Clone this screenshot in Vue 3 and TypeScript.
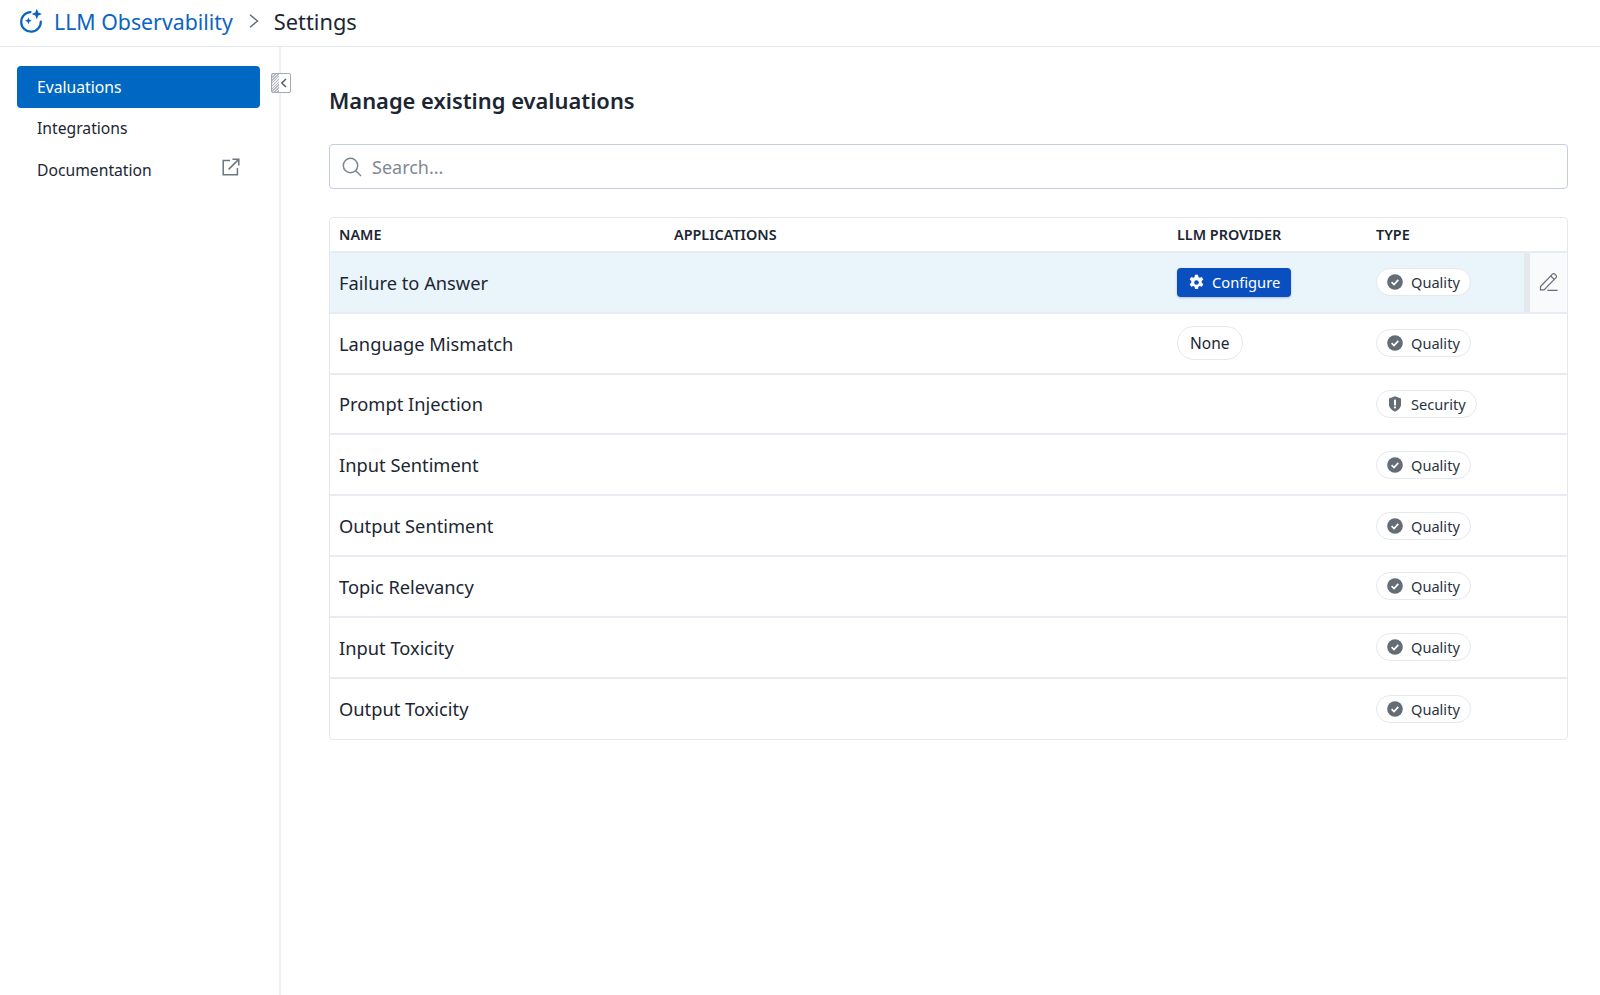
<script setup lang="ts">
interface Row {
  name: string;
  provider?: 'configure' | 'none';
  type: 'Quality' | 'Security';
  hover?: boolean;
}

const rows: Row[] = [
  { name: 'Failure to Answer', provider: 'configure', type: 'Quality', hover: true },
  { name: 'Language Mismatch', provider: 'none', type: 'Quality' },
  { name: 'Prompt Injection', type: 'Security' },
  { name: 'Input Sentiment', type: 'Quality' },
  { name: 'Output Sentiment', type: 'Quality' },
  { name: 'Topic Relevancy', type: 'Quality' },
  { name: 'Input Toxicity', type: 'Quality' },
  { name: 'Output Toxicity', type: 'Quality' },
];
</script>

<template>
  <div class="page">
    <header class="topbar">
      <svg class="logo" width="26" height="26" viewBox="0 0 26 26" fill="none">
        <path d="M12.500 4.100A9.800 9.800 0 1 0 22.800 13.500" stroke="#0b64c0" stroke-width="2.200" stroke-linecap="round" />
        <path d="M18.800 .8l1.500 3.700 3.700 1.500-3.700 1.500-1.500 3.700-1.500-3.700-3.700-1.500 3.700-1.500z" fill="#0b64c0" />
        <path d="M10.400 9.400l1 2.400 2.400 1-2.400 1-1 2.400-1-2.400-2.400-1 2.400-1z" fill="#0b64c0" />
      </svg>
      <span class="crumb-link">LLM Observability</span>
      <svg class="crumb-sep" width="12" height="16" viewBox="0 0 12 16" fill="none">
        <path d="M2 1.800L9.500 8 2 14.200" stroke="#5f6b7a" stroke-width="1.400" />
      </svg>
      <span class="crumb-current">Settings</span>
    </header>

    <div class="body">
      <aside class="sidebar">
        <nav class="nav">
          <a class="nav-item active">Evaluations</a>
          <a class="nav-item">Integrations</a>
          <a class="nav-item">
            Documentation
            <svg class="ext" width="18" height="18" viewBox="0 0 18 18" fill="none">
              <path d="M8 2.600H1.200v14.200h14.200V10" stroke="#6c7680" stroke-width="1.500" />
              <path d="M6.600 11.400L16.400 1.600M10.400 1.200h6.400v6.400" stroke="#6c7680" stroke-width="1.500" />
            </svg>
          </a>
        </nav>
        <button class="collapse" type="button">
          <span class="hatch"></span>
          <svg width="10" height="18" viewBox="0 0 10 18" fill="none">
            <path d="M7 5L2.800 9 7 13" stroke="#4f5965" stroke-width="1.400" />
          </svg>
        </button>
      </aside>

      <main class="main">
        <h1 class="title">Manage existing evaluations</h1>

        <div class="search">
          <svg width="22" height="22" viewBox="0 0 22 22" fill="none">
            <circle cx="9.500" cy="9.500" r="7.200" stroke="#7b8590" stroke-width="1.500" />
            <path d="M14.800 14.800l5.200 5.200" stroke="#7b8590" stroke-width="1.500" />
          </svg>
          <span class="placeholder">Search...</span>
        </div>

        <div class="table">
          <div class="row head">
            <div class="col-name">NAME</div>
            <div class="col-apps">APPLICATIONS</div>
            <div class="col-provider">LLM PROVIDER</div>
            <div class="col-type">TYPE</div>
          </div>
          <div v-for="row in rows" :key="row.name" class="row item" :class="{ hover: row.hover }">
            <div class="col-name">{{ row.name }}</div>
            <div class="col-apps"></div>
            <div class="col-provider">
              <button v-if="row.provider === 'configure'" class="configure" type="button">
                <svg width="17" height="17" viewBox="0 0 16 16">
                  <path fill="#fff" fill-rule="evenodd" d="M6.600.8h2.800l.4 2 1.300.7 1.900-.7 1.400 2.400-1.500 1.400v1.600l1.500 1.400-1.400 2.400-1.900-.7-1.300.7-.4 2H6.600l-.4-2-1.300-.7-1.900.7-1.400-2.400 1.500-1.400V6.600L1.600 5.200 3 2.800l1.900.7 1.300-.7zM8 5.800a2.200 2.200 0 1 0 0 4.400 2.200 2.200 0 0 0 0-4.400z" />
                </svg>
                Configure
              </button>
              <span v-else-if="row.provider === 'none'" class="none-pill">None</span>
            </div>
            <div class="col-type">
              <span class="pill">
                <svg v-if="row.type === 'Quality'" width="16" height="16" viewBox="0 0 16 16">
                  <circle cx="8" cy="8" r="7.800" fill="#646d76" />
                  <path d="M4.600 8.200l2.400 2.300 4.300-4.600" fill="none" stroke="#fff" stroke-width="1.700" />
                </svg>
                <svg v-else width="16" height="16" viewBox="0 0 16 16">
                  <path d="M8 .2l6 2.200v6.200c0 3.200-2.700 5.700-6 7.200-3.300-1.500-6-4-6-7.200V2.400z" fill="#646d76" />
                  <rect x="7" y="3.400" width="2" height="6" rx=".7" fill="#fff" />
                  <circle cx="8" cy="11.400" r="1.150" fill="#fff" />
                </svg>
                {{ row.type }}
              </span>
            </div>
            <div v-if="row.hover" class="edit-cell">
              <svg width="20" height="20" viewBox="0 0 20 20" fill="none">
                <path d="M1.500 14.500L13.500 2.200c.7-.7 1.700-.7 2.300-.1l1.300 1.300c.6.600.6 1.600-.1 2.300L5 17.800H1.500z" stroke="#646d76" stroke-width="1.200" />
                <path d="M11.800 4l3.600 3.600M8.500 18.300h10" stroke="#646d76" stroke-width="1.200" />
              </svg>
            </div>
          </div>
        </div>
      </main>
    </div>
  </div>
</template>

<style>
html,
body {
  margin: 0;
  background: #fff;
}
</style>

<style scoped>
.page {
  width: 1600px;
  height: 995px;
  display: flex;
  flex-direction: column;
  overflow: hidden;
  font-family: 'Noto Sans', sans-serif;
  color: #1c2633;
  background: #fff;
}

.topbar {
  height: 42px;
  display: flex;
  align-items: center;
  padding-left: 18px;
  padding-bottom: 4px;
  border-bottom: 1px solid #e6e8f0;
  flex-shrink: 0;
}

.logo {
  margin-right: 10px;
}

.crumb-link {
  font-size: 21.300px;
  color: #0b64c0;
}

.crumb-sep {
  margin: 0 14px 0 15px;
}

.crumb-current {
  font-size: 21.800px;
  color: #1c2633;
}

.body {
  flex: 1;
  display: flex;
}

.sidebar {
  width: 281px;
  flex-shrink: 0;
  box-sizing: border-box;
  border-right: 2px solid #eff0f5;
  position: relative;
  padding: 19px 19px 0 17px;
}

.nav {
  display: flex;
  flex-direction: column;
}

.nav-item {
  height: 41.500px;
  display: flex;
  align-items: center;
  justify-content: space-between;
  padding: 0 20px;
  font-size: 15.700px;
  color: #1c2633;
  border-radius: 4px;
}

.nav-item.active {
  background: #0067c2;
  color: #fff;
}

.ext {
  margin-top: -5px;
}

.collapse {
  position: absolute;
  top: 26px;
  left: 271px;
  width: 20px;
  height: 20px;
  padding: 0;
  display: flex;
  align-items: center;
  background: #fff;
  border: 1px solid #a4aab3;
  border-radius: 2px;
}

.hatch {
  width: 7px;
  height: 100%;
  flex-shrink: 0;
  background: repeating-linear-gradient(135deg, #b6bbc2 0 1px, #eceef1 1px 2px);
}

.main {
  flex: 1;
  min-width: 0;
  padding: 36px 32px 0 48px;
}

.title {
  margin: 0;
  font-size: 21.900px;
  line-height: 36px;
  font-weight: 600;
  color: #1c2633;
}

.search {
  margin-top: 25px;
  height: 45px;
  box-sizing: border-box;
  display: flex;
  align-items: center;
  gap: 9px;
  padding-left: 11px;
  border: 1.500px solid #c6cce4;
  border-radius: 4px;
}

.placeholder {
  font-size: 18px;
  color: #7f8994;
}

.table {
  margin-top: 28px;
  border: 1px solid #e6e8f0;
  border-radius: 4px;
  overflow: hidden;
}

.row {
  display: grid;
  grid-template-columns: 335px 503px 199px 1fr;
  align-items: center;
  padding-left: 9px;
  position: relative;
}

.head {
  height: 33px;
  font-size: 14.400px;
  font-weight: 600;
  color: #1c2633;
  border-bottom: 2px solid #e9ebf2;
}

.item {
  height: 60.800px;
  box-sizing: border-box;
  font-size: 18.300px;
  border-bottom: 2px solid #e9ebf2;
}

.item:last-child {
  border-bottom: none;
}

.item.hover {
  background: #e9f4fb;
}

.configure {
  height: 29px;
  display: inline-flex;
  align-items: center;
  gap: 7px;
  padding: 0 11px 0 11px;
  font-family: inherit;
  font-size: 14.700px;
  color: #fff;
  background: #0a4fbf;
  border: none;
  border-radius: 4px;
  box-shadow: 0 1px 2px rgba(20, 40, 90, 0.25);
}

.none-pill {
  display: inline-flex;
  align-items: center;
  height: 34px;
  box-sizing: border-box;
  padding: 0 13px 0 12px;
  font-size: 15.500px;
  background: #fff;
  border: 1px solid #e6e8f0;
  border-radius: 17px;
}

.pill {
  display: inline-flex;
  align-items: center;
  gap: 8px;
  height: 28px;
  box-sizing: border-box;
  padding: 0 10px;
  font-size: 14.600px;
  color: #2a3442;
  background: #fff;
  border: 1px solid #e6e8f0;
  border-radius: 14px;
}

.edit-cell {
  position: absolute;
  top: 0;
  right: 0;
  bottom: 0;
  width: 37px;
  display: flex;
  align-items: center;
  justify-content: center;
  background: #f8fafc;
  border-left: 6px solid #e6e8f0;
}
</style>
